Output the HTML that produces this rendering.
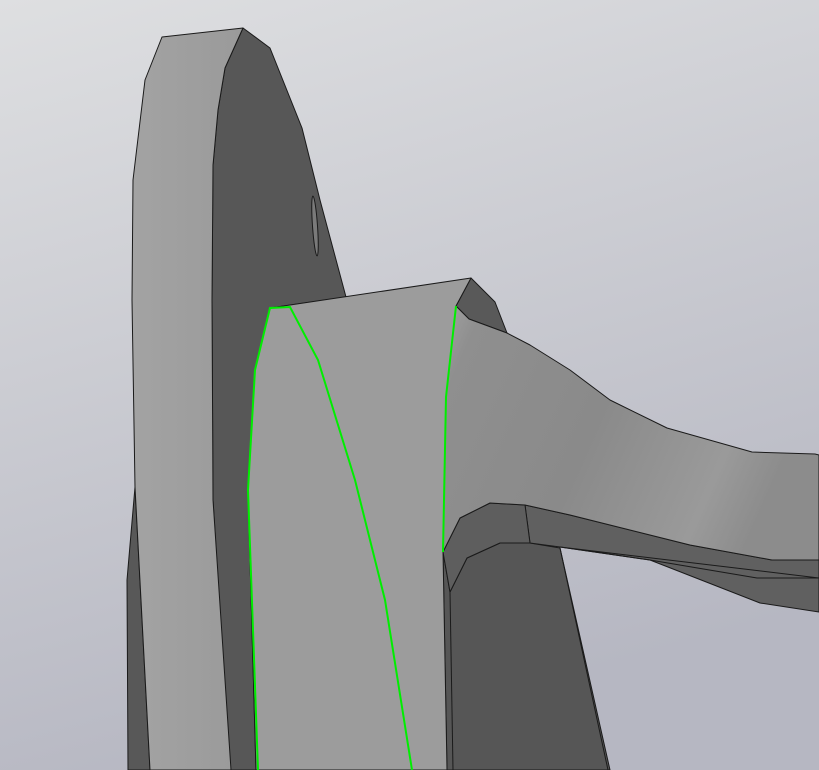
<!DOCTYPE html>
<html><head><style>
html,body{margin:0;padding:0;width:819px;height:770px;overflow:hidden}
svg{display:block}
</style></head><body>
<svg width="819" height="770" viewBox="0 0 819 770" xmlns="http://www.w3.org/2000/svg">
<defs>
<linearGradient id="bg" x1="0" y1="0" x2="0.3" y2="1">
<stop offset="0" stop-color="#dedfe1"/><stop offset="1" stop-color="#b6b7c2"/>
</linearGradient>
<linearGradient id="plate" x1="0" y1="0" x2="1" y2="0">
<stop offset="0" stop-color="#a3a3a3"/><stop offset="1" stop-color="#9a9a9a"/>
</linearGradient>
<linearGradient id="arm" x1="0" y1="0" x2="1" y2="0.3">
<stop offset="0" stop-color="#a2a2a2"/><stop offset="0.1" stop-color="#8f8f8f"/><stop offset="0.5" stop-color="#8a8a8a"/><stop offset="0.85" stop-color="#9a9a9a"/><stop offset="1" stop-color="#8c8c8c"/>
</linearGradient>
</defs>
<rect width="819" height="770" fill="url(#bg)"/>
<g stroke="#1a1a1a" stroke-width="1" stroke-linejoin="round">
<polygon points="135,487 127,580 128,770 150,770" fill="#585858"/>
<polygon points="243,28 270,48 302,128 320,200 346,297 270,308 255,370 248,490 256,770 230,770 213,500 212,300 213,165 218,110 225,68" fill="#575757"/>
<ellipse cx="315" cy="226" rx="2.5" ry="30" transform="rotate(-4 315 226)" fill="#7a7a7a"/>
<polygon points="162,37 243,28 225,68 218,110 213,165 212,300 213,500 231,770 150,770 135,487 132,300 133,180 145,80" fill="url(#plate)"/>
<polygon points="443,552 450,592 467,558 500,543 530,543 560,548 610,770 447,770" fill="#565656"/>
<line x1="560" y1="548" x2="608" y2="770"/>
<line x1="450" y1="592" x2="453" y2="770"/>
<polygon points="471,278 495,302 507,333 469,319 456,306" fill="#595959"/>
<polygon points="525,505 570,515 690,545 772,560 819,560 819,612 760,603 650,560 560,547 530,543" fill="#606060"/>
<polygon points="560,547 650,560 757,578 819,578" fill="none"/>
<polygon points="443,552 460,518 490,503 525,505 530,543 500,543 467,558 450,592" fill="#5e5e5e"/>
<polygon points="456,306 469,319 507,333 530,345 570,370 610,400 667,428 752,452 815,454 819,455 819,560 772,560 690,545 570,515 525,505 490,503 460,518 443,552 446,397" fill="url(#arm)"/>
<polygon points="270,308 471,278 456,306 446,397 443,552 447,770 256,770 248,490 255,370" fill="#9c9c9c"/>
</g>
<g fill="none" stroke="#00ee00" stroke-width="2">
<polyline points="258,770 248,490 255,370 270,308 290,307 318,360 355,480 385,600 412,770"/>
<polyline points="456,306 446,397 443,552"/>
</g>
</svg>
</body></html>
